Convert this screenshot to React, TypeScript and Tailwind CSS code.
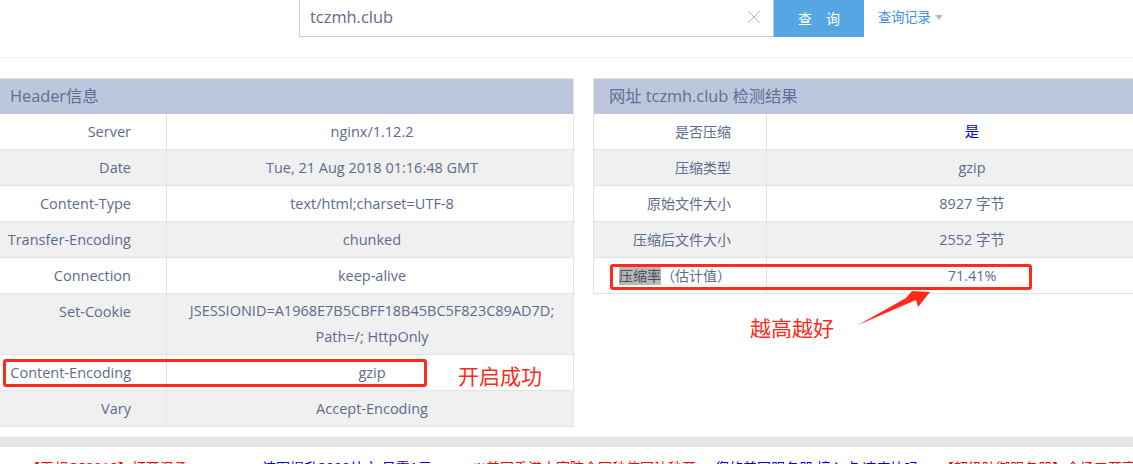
const FONT = "font-['Open_Sans','Noto_Sans_CJK_SC',sans-serif]";

type Row = { k: string; v: string; tall?: boolean };

const headerRows: Row[] = [
  { k: "Server", v: "nginx/1.12.2" },
  { k: "Date", v: "Tue, 21 Aug 2018 01:16:48 GMT" },
  { k: "Content-Type", v: "text/html;charset=UTF-8" },
  { k: "Transfer-Encoding", v: "chunked" },
  { k: "Connection", v: "keep-alive" },
  { k: "Set-Cookie", v: "JSESSIONID=A1968E7B5CBFF18B45BC5F823C89AD7D; Path=/; HttpOnly", tall: true },
  { k: "Content-Encoding", v: "gzip" },
  { k: "Vary", v: "Accept-Encoding" },
];

const resultRows: Row[] = [
  { k: "是否压缩", v: "是" },
  { k: "压缩类型", v: "gzip" },
  { k: "原始文件大小", v: "8927 字节" },
  { k: "压缩后文件大小", v: "2552 字节" },
  { k: "压缩率（估计值）", v: "71.41%" },
];

function Table({ title, rows, left }: { title: string; rows: Row[]; left: boolean }) {
  return (
    <section className={left ? "w-[574px] shrink-0 border-r border-[#e4e4e4]" : "w-[584px] shrink-0 border-l border-[#e4e4e4]"}>
      <h2 className={`flex h-[36px] items-center border-t border-[#e4e4e4] bg-[#bcc7de] pb-px text-[16.3px] font-normal text-[#5d6f92] ${left ? "pl-2.5" : "pl-[15px]"}`}>
        {title}
      </h2>
      {rows.map((r, i) => (
        <div key={r.k} className={`flex border-b border-[#e4e4e4] text-[#5d6b8c] ${r.tall ? "h-[61px]" : "h-9"} ${i % 2 ? "bg-[#f0f0f0]" : "bg-white"} ${left ? "text-[14.5px]" : "text-[14px]"}`}>
          <div className={`flex shrink-0 justify-end border-r border-[#e4e4e4] pr-[35px] leading-[24px] ${left ? "w-[167px]" : "w-[173px]"} ${r.tall ? "items-start pt-[6px]" : "items-center"}`}>
            {r.k === "压缩率（估计值）" ? (
              <span><span className="bg-[#b9b9b9] text-[#4a4f5c]">压缩率</span>（估计值）</span>
            ) : r.k}
          </div>
          <div className={`flex flex-1 items-center justify-center text-center leading-[26px] ${r.v === "是" ? "text-[#0000ee]" : ""} ${left ? "pl-5 pr-4" : "text-[14.4px]"}`}>
            <span>{r.v}</span>
          </div>
        </div>
      ))}
    </section>
  );
}

export default function App() {
  return (
    <div className={`${FONT} relative h-[464px] w-[1133px] overflow-hidden bg-white`}>
      <header className="flex h-[58px] items-start border-b border-[#f2f2f2] pl-[299px]">
        <div className="flex h-[37px] w-[475px] items-center justify-between border-x border-b border-[#c3cbe0] pb-[2px] pl-2.5 pr-3 text-[16.4px] text-[#5d6b8c]">
          <span>tczmh.club</span>
          <svg width="14" height="14" viewBox="0 0 14 14" stroke="#b4b4b4" strokeWidth="1"><path d="M1 1l12 12M13 1L1 13" /></svg>
        </div>
        <button className="flex h-[37px] w-[90px] items-center justify-center gap-[14px] bg-[#55a6e3] pb-px text-[14px] text-white">
          <span>查</span>
          <span>询</span>
        </button>
        <div className="ml-3.5 mt-[8px] flex items-center gap-1 text-[13.2px] text-[#3f8fe8]">
          查询记录
          <svg width="8" height="5" viewBox="0 0 8 5" fill="#b9b9b9"><path d="M0 0h8L4 5z" /></svg>
        </div>
      </header>

      <main className="mt-[20px] flex items-start gap-[19px]">
        <Table title="Header信息" rows={headerRows} left />
        <Table title="网址 tczmh.club 检测结果" rows={resultRows} left={false} />
      </main>

      <div className="mt-[10px] h-2.5 bg-[#e6e6e6]" />

      <footer className="mt-[13px] flex whitespace-nowrap pl-[26px] text-[14px] leading-[16px]">
        <span className="w-[236px] shrink-0 text-[#ff0000]">【天想CC2018】打开温柔</span>
        <span className="w-[210px] shrink-0 text-[#0000ee]">该图提升2000处文 日需1元</span>
        <span className="w-[243px] shrink-0 text-[#ff0000]">※美国香港大宽院全网秒使回法秒开</span>
        <span className="w-[225px] shrink-0 text-[#0000ee]">您的美国服务器 接入点 速度快吗</span>
        <span className="shrink-0 text-[#ff0000]">【超级防御服务器】全场五开高防</span>
      </footer>

      {/* red annotations drawn over the screenshot */}
      <div className="absolute left-[3px] top-[359px] h-[28px] w-[424px] rounded-[3px] border-[3px] border-[#ff2a1a]" />
      <div className="absolute left-[610px] top-[264px] h-[26px] w-[422px] rounded-[3px] border-[3px] border-[#ff2a1a]" />
      <div className="absolute left-[458px] top-[363px] text-[21px] leading-[26px] text-[#ff2a1a]">开启成功</div>
      <div className="absolute left-[750px] top-[315px] text-[21px] leading-[26px] text-[#ff2a1a]">越高越好</div>
      <svg className="absolute left-[855px] top-[288px]" width="80" height="40" viewBox="0 0 80 40" fill="#ff2a1a">
        <path d="M3 37L51 10L57 3L75 4L63 19L61 12z" />
      </svg>
    </div>
  );
}
